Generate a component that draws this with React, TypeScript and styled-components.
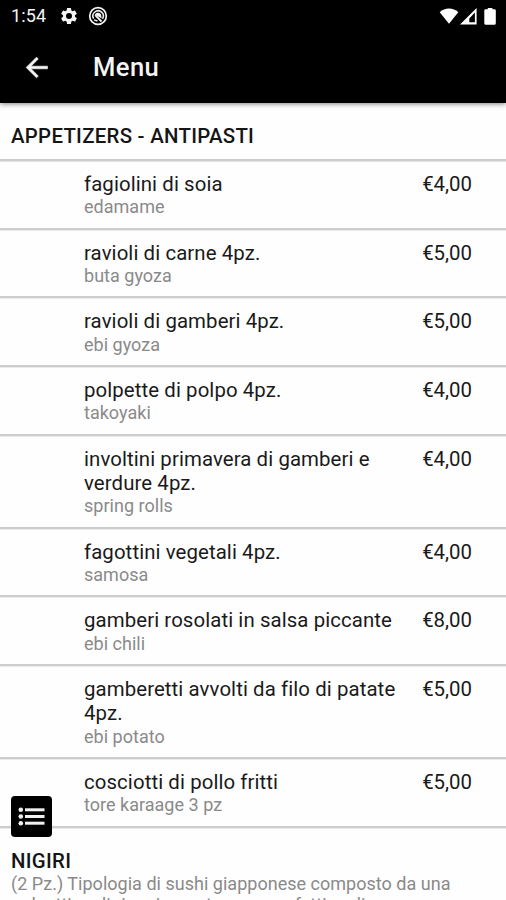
import React from "react";
import styled, { createGlobalStyle } from "styled-components";

const GlobalStyle = createGlobalStyle`
  * { box-sizing: border-box; }
  html, body { margin: 0; padding: 0; background: #fff; overflow: hidden; }
  body { font-family: Roboto, "Liberation Sans", sans-serif; color: #1a1a1a; }
`;

const Screen = styled.main`
  position: relative;
  width: 506px;
  height: 900px;
  overflow: hidden;
  background: #fefefe;
`;

const Header = styled.header`
  height: 102.5px;
  background: #000;
  color: #f4f4f4;
  box-shadow: 0 1px 5px rgba(0, 0, 0, 0.5);
`;

const StatusBar = styled.div`
  display: flex;
  align-items: center;
  height: 32px;
  padding: 0 8px 0 11px;
`;

const Clock = styled.span`
  width: 48px;
  font-size: 18px;
  line-height: 32px;
  letter-spacing: 0.1px;
`;

const StatusIcons = styled.div<{ $end?: boolean }>`
  display: flex;
  align-items: center;
  gap: ${(p) => (p.$end ? "1px" : "9px")};
  margin-left: ${(p) => (p.$end ? "auto" : "0")};
  svg { display: block; }
`;

const AppBar = styled.div`
  display: flex;
  align-items: center;
  height: 70px;
  padding-left: 21px;
`;

const BackButton = styled.button`
  display: flex;
  width: 72px;
  padding: 0;
  border: 0;
  background: none;
  color: inherit;
`;

const Title = styled.h1`
  margin: 0;
  font-size: 25.6px;
  font-weight: 500;
  line-height: 32px;
  letter-spacing: 0.4px;
`;

const SectionHeader = styled.div`
  display: flex;
  align-items: center;
  height: 56.5px;
  padding: 10px 11px 0;
`;

const SectionTitle = styled.h2`
  margin: 0;
  font-size: 20.4px;
  font-weight: 500;
  line-height: 24px;
  letter-spacing: 0.28px;
  color: #151515;
`;

const List = styled.ul`
  margin: 0;
  padding: 0;
  list-style: none;
  border-top: 2px solid #cdcdcd;
  box-shadow: inset 0 1px 0 #e2e2e2;
`;

const Row = styled.li`
  display: flex;
  justify-content: space-between;
  padding: 10.9px 34px 9.8px 84px;
  border-bottom: 2px solid #cdcdcd;
  box-shadow: 0 1px 0 #ebebeb;
`;

const Name = styled.div`
  width: 320px;
  font-size: 20.4px;
  line-height: 24.3px;
  letter-spacing: 0.09px;
  white-space: pre-line;
`;

const Sub = styled.div`
  font-size: 18px;
  line-height: 21.7px;
  letter-spacing: 0.02px;
  color: #8a8a8a;
`;

const Price = styled.div`
  font-size: 20.4px;
  line-height: 24.3px;
`;

const NextSection = styled.section`
  padding: 21px 11px 0;
`;

const Description = styled.p`
  margin: 0;
  font-size: 18px;
  line-height: 21px;
  letter-spacing: 0.02px;
  color: #8a8a8a;
  white-space: pre-line;
`;

const IndexButton = styled.button`
  position: absolute;
  left: 11px;
  top: 796px;
  display: flex;
  align-items: center;
  justify-content: center;
  width: 41px;
  height: 41px;
  padding: 0;
  border: 0;
  border-radius: 4px;
  background: #000;
`;

const GearIcon = () => (
  <svg width="20" height="20" viewBox="0 0 24 24" fill="#f4f4f4">
    <path d="M19.14 12.94c.04-.3.06-.61.06-.94 0-.32-.02-.64-.07-.94l2.03-1.58a.49.49 0 0 0 .12-.61l-1.92-3.32a.49.49 0 0 0-.59-.22l-2.39.96c-.5-.38-1.03-.7-1.62-.94l-.36-2.54a.48.48 0 0 0-.48-.41h-3.84c-.24 0-.43.17-.47.41l-.36 2.54c-.59.24-1.13.57-1.62.94l-2.39-.96a.48.48 0 0 0-.59.22L2.74 8.87a.47.47 0 0 0 .12.61l2.03 1.58c-.05.3-.09.63-.09.94s.02.64.07.94l-2.03 1.58a.49.49 0 0 0-.12.61l1.92 3.32c.12.22.37.29.59.22l2.39-.96c.5.38 1.03.7 1.62.94l.36 2.54c.05.24.24.41.48.41h3.84c.24 0 .44-.17.47-.41l.36-2.54c.59-.24 1.13-.56 1.62-.94l2.39.96c.22.08.47 0 .59-.22l1.92-3.32a.47.47 0 0 0-.12-.61zM12 15.6A3.6 3.6 0 1 1 12 8.4a3.6 3.6 0 0 1 0 7.2z" />
  </svg>
);

const DebugIcon = () => (
  <svg width="20" height="20" viewBox="0 0 20 20" fill="none" stroke="#f4f4f4">
    <circle cx="10" cy="10" r="8.3" strokeWidth="1.7" />
    <path d="M5.6 12.6a5.2 5.2 0 1 1 8.9.2" strokeWidth="1.5" />
    <path d="M6.8 8.4c1.6-2.2 5-2.1 6.2.2l.8 4z" fill="#f4f4f4" stroke="none" />
    <path d="M7.2 9.2l6.3 6.3" strokeWidth="1.9" />
    <path d="M6 13.8l3.4 1.2" strokeWidth="1.4" />
  </svg>
);

const SignalIcons = () => (
  <svg width="60" height="20" viewBox="0 0 60 20" fill="#fff">
    <path d="M1.7 6.2C6.8 1.2 15.2 1.2 20.3 6.2L11 17.8z" />
    <path fillRule="evenodd" d="M38.6 2v16.6H22zM36.9 6.6v9.6h-5.6v-3.6z" />
    <path d="M49.8 2h4.6v1.3h2.1a1.3 1.3 0 0 1 1.3 1.3v12.7a1.5 1.5 0 0 1-1.5 1.5h-8.5a1.5 1.5 0 0 1-1.5-1.5V4.6a1.3 1.3 0 0 1 1.3-1.3h2.2z" />
  </svg>
);

const BackIcon = () => (
  <svg width="31" height="31" viewBox="0 0 24 24" fill="#f4f4f4" stroke="#f4f4f4" strokeWidth="0.5">
    <path d="M20.5 11H7.8l5.6-5.6L12 4l-8 8 8 8 1.4-1.4L7.8 13h12.7z" />
  </svg>
);

const ListIcon = () => (
  <svg width="27" height="19" viewBox="0 0 27 19" fill="#f0f0f0">
    {[2.8, 9.5, 16.2].map((y) => (
      <g key={y}>
        <circle cx="2.8" cy={y} r="2.3" />
        <rect x="7" y={y - 1.5} width="19.5" height="3" />
      </g>
    ))}
  </svg>
);

const dishes = [
  { name: "fagiolini di soia", sub: "edamame", price: "€4,00" },
  { name: "ravioli di carne 4pz.", sub: "buta gyoza", price: "€5,00" },
  { name: "ravioli di gamberi 4pz.", sub: "ebi gyoza", price: "€5,00" },
  { name: "polpette di polpo 4pz.", sub: "takoyaki", price: "€4,00" },
  { name: "involtini primavera di gamberi e\nverdure 4pz.", sub: "spring rolls", price: "€4,00" },
  { name: "fagottini vegetali 4pz.", sub: "samosa", price: "€4,00" },
  { name: "gamberi rosolati in salsa piccante", sub: "ebi chili", price: "€8,00" },
  { name: "gamberetti avvolti da filo di patate\n4pz.", sub: "ebi potato", price: "€5,00" },
  { name: "cosciotti di pollo fritti", sub: "tore karaage 3 pz", price: "€5,00" },
];

export default function App() {
  return (
    <Screen>
      <GlobalStyle />
      <Header>
        <StatusBar>
          <Clock>1:54</Clock>
          <StatusIcons>
            <GearIcon />
            <DebugIcon />
          </StatusIcons>
          <StatusIcons $end>
            <SignalIcons />
          </StatusIcons>
        </StatusBar>
        <AppBar>
          <BackButton aria-label="Back">
            <BackIcon />
          </BackButton>
          <Title>Menu</Title>
        </AppBar>
      </Header>
      <SectionHeader>
        <SectionTitle>APPETIZERS - ANTIPASTI</SectionTitle>
      </SectionHeader>
      <List>
        {dishes.map((d) => (
          <Row key={d.name}>
            <div>
              <Name>{d.name}</Name>
              <Sub>{d.sub}</Sub>
            </div>
            <Price>{d.price}</Price>
          </Row>
        ))}
      </List>
      <NextSection>
        <SectionTitle>NIGIRI</SectionTitle>
        <Description>
          {"(2 Pz.) Tipologia di sushi giapponese composto da una\npolpettina di riso ricoperta con una fettina di"}
        </Description>
      </NextSection>
      <IndexButton aria-label="Menu sections">
        <ListIcon />
      </IndexButton>
    </Screen>
  );
}
